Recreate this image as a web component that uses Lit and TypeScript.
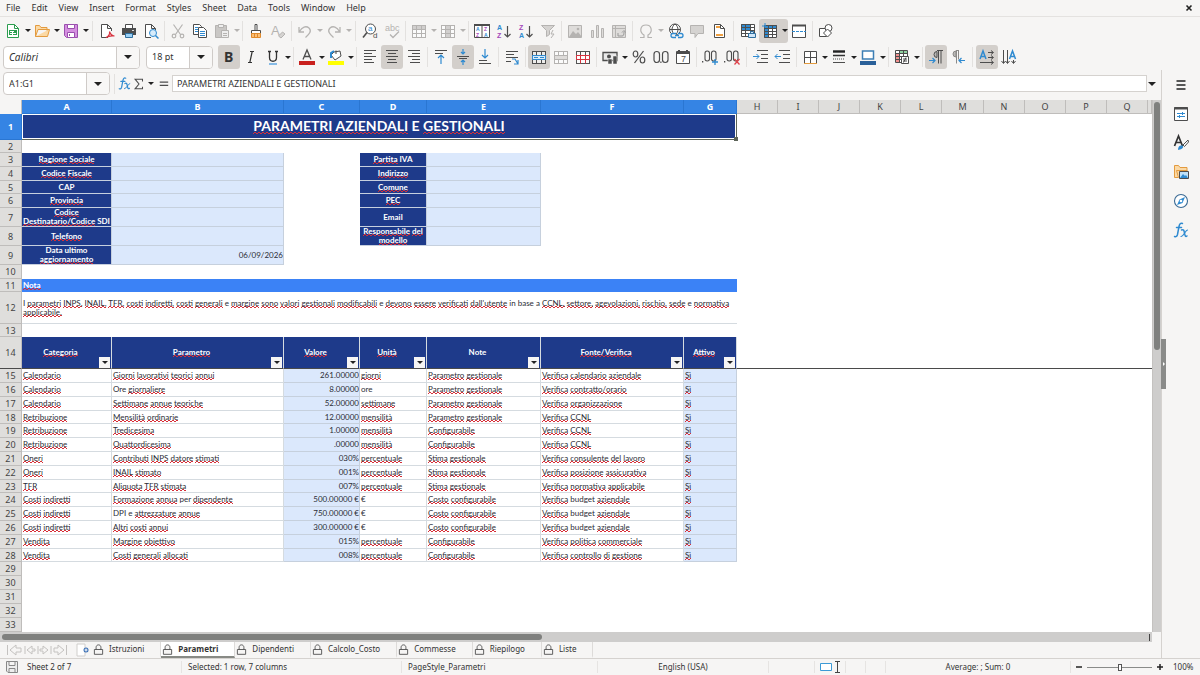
import { LitElement, html, svg, css, nothing, TemplateResult, SVGTemplateResult } from 'lit';
import { customElement, property } from 'lit/decorators.js';
import { classMap } from 'lit/directives/class-map.js';
import { styleMap } from 'lit/directives/style-map.js';

const G = '#4d4d4d';
const M = '#b5b3b1';
const B = '#2f8ad0';
const V = '#a347ba';

const letters = (x: number, y: number, c: string, t: string, size = 8, weight = 400) =>
  svg`<text x=${x} y=${y} fill=${c} font-size=${size} font-weight=${weight} font-family="Liberation Sans, sans-serif">${t}</text>`;

const lines = (color: string, ...segs: number[][]) =>
  svg`<path fill="none" stroke=${color} d=${segs.map(([x1, y, x2]) => `M${x1} ${y}H${x2}`).join('')} />`;

const grid = (c: string, extra?: SVGTemplateResult) =>
  svg`<rect x="1.5" y="2.5" width="13" height="12" fill="#fff" fill-opacity=".6" stroke=${c}/><path fill="none" stroke=${c} d="M1.5 6.5h13M1.5 10.5h13M5.5 2.5v12M10.5 2.5v12"/>${extra ?? nothing}`;

const icons: Record<string, SVGTemplateResult> = {
  new: svg`<path fill="#fff" stroke="#2a9d4e" d="M2.5 1.5h7l4 4v9h-11z"/><path fill="none" stroke="#2a9d4e" d="M9.5 1.5v4h4"/><path fill="#2a9d4e" d="M4 7h8v5H4z"/><path stroke="#fff" d="M5 8.5h4M5 10.5h6M7.5 8v4" fill="none"/>`,
  open: svg`<path fill="#fbd9a5" stroke="#e39b3f" d="M1.5 13.500V2.500h4l1.500 2h6v3M1.500 13.500h12l2-7H4z"/>`,
  save: svg`<path fill="#d58fe0" stroke="#9a4fae" d="M1.5 1.500h13v13H3.500l-2-2z"/><path fill="#fff" stroke="#9a4fae" d="M4.500 1.500h7v4h-7zM4.500 9.500h7v5h-7z"/><path stroke="#9a4fae" d="M6.500 11v2"/>`,
  pdf: svg`<path fill="#fff" stroke=${G} d="M9 14.500H2.500v-13h6l4 4V8M8.500 1.500v4h4"/><path fill="none" stroke="#d8333f" stroke-width="1.200" d="M7 14.500c3-1 4-4 3.500-6 1 3 2.500 4.500 5 4.500-3-.5-6 0-8.500 1.500z"/>`,
  print: svg`<path fill="#fff" stroke=${G} d="M4.500 5V1.500h7V5"/><path fill="#4d4d4d" d="M1 5h14v7H1z"/><path fill="#9bd0f5" stroke="#2f6f9f" d="M4.500 10.500h7v4h-7z"/><path stroke="#ddd" d="M11 7.500h2"/>`,
  preview: svg`<path fill="#fff" stroke=${G} d="M8 14.500H2.500v-13h6l4 4V7M8.500 1.500v4h4"/><circle cx="10" cy="10" r="3.500" fill="#d7ecfb" stroke=${B}/><path stroke=${B} stroke-width="1.500" d="M12.500 12.500l3 3"/>`,
  cut: svg`<g fill="none" stroke=${M} stroke-width="1.200"><path d="M3.500 1.500l7 10M12.500 1.500l-7 10"/><circle cx="4" cy="13" r="1.800"/><circle cx="12" cy="13" r="1.800"/></g>`,
  copy: svg`<path fill="#fff" stroke=${G} d="M1.500 1.500h6l2 2v8h-8z"/><path stroke=${B} d="M3 4.500h3M3 6.500h3M3 8.500h3"/><path fill="#fff" stroke=${G} d="M6.500 4.500h5l3 3v7h-8z"/><path stroke=${B} d="M8 8.500h5M8 10.500h5M8 12.500h5"/>`,
  paste: svg`<path fill="#c9c7c5" stroke=${M} d="M1.500 2.500h11v12h-11z"/><path fill="#eee" stroke=${M} d="M4.500 1.500h5v3h-5zM7.500 7.500h7v7h-7z"/><path stroke=${M} d="M9 10.500h4M9 12.500h4"/>`,
  brush: svg`<path fill="#fff" stroke=${G} d="M7 1.500h2v6H7zM3.500 7.500h9v3h-9z"/><path fill="#fbbf77" stroke="#e08a2c" d="M3.500 10.500h9v4h-9z"/><path stroke="#e08a2c" d="M6.500 11v3M9.500 11v3"/>`,
  clear: svg`${letters(1, 12, M, 'A', 13)}<path fill="#d5d3d1" stroke=${M} d="M8.500 13l4-4 2.500 2-4 4z"/>`,
  undo: svg`<path fill="none" stroke=${M} stroke-width="1.300" d="M2 4v5h5M2.500 8.500C5 4 9 2.500 12 5c3 3 .5 6-3.500 9.500"/>`,
  redo: svg`<path fill="none" stroke=${M} stroke-width="1.300" d="M14 4v5H9M13.500 8.500C11 4 7 2.500 4 5c-3 3-.5 6 3.500 9.500"/>`,
  find: svg`<circle cx="8.500" cy="6" r="5" fill="#fff" stroke=${G}/><path stroke=${G} stroke-width="1.600" d="M5 9.500l-4 5"/>${letters(6, 8, B, 'a', 8)}${letters(11, 15, G, 'd', 8)}`,
  spell: svg`${letters(1, 8, M, 'abc', 9)}<path fill="none" stroke=${M} stroke-width="1.300" d="M6 11.500l3 3 6-6"/>`,
  row: grid(M, svg`<path fill=${M} fill-opacity=".6" d="M2 3h12v4H2z" />`),
  col: grid(M, svg`<path fill=${M} fill-opacity=".6" d="M5 3h5v11H5z" />`),
  sort: svg`<path fill="#fff" stroke=${G} d="M.5 1.500h15v13H.5zM8 3v12"/><path stroke=${G} stroke-width="2" d="M0 2h16"/>${letters(2, 8, B, 'A', 5, 700)}${letters(2, 14, V, 'Z', 5, 700)}${letters(10, 8, V, 'Z', 5, 700)}${letters(10, 14, B, 'A', 5, 700)}`,
  az: svg`${letters(1, 7, B, 'A', 7, 700)}${letters(1, 15, V, 'Z', 7, 700)}<path fill="none" stroke=${G} stroke-width="1.200" d="M11.500 3v11M8.500 11l3 3 3-3"/>`,
  za: svg`${letters(1, 7, V, 'Z', 7, 700)}${letters(1, 15, B, 'A', 7, 700)}<path fill="none" stroke=${G} stroke-width="1.200" d="M11.500 3v11M8.500 11l3 3 3-3"/>`,
  filter: svg`<path fill="#d5d3d1" stroke=${M} d="M1.500 2.500h13l-5 5v4l-3 2v-6z"/><path fill="none" stroke=${M} d="M13 7l-2 4h3l-3 4"/>`,
  image: svg`<path fill="#dedcda" stroke=${M} d="M1.500 2.500h13v12h-13z"/><path fill=${M} d="M2 14l4-6 3 3 2-2 4 5z"/><circle cx="11" cy="6" r="1.300" fill=${M}/>`,
  chart: svg`<path fill="#dedcda" stroke=${M} d="M2.500 7.500h2v7h-2zM7.500 2.500h2v12h-2zM12.500 5.500h2v9h-2z"/>`,
  pivot: svg`<path fill="#dedcda" stroke=${M} d="M1.500 2.500h13v12h-13zM1.500 5.500h13M4.500 2.500v12"/><path fill="none" stroke="#999" d="M7 10v3h4c1.500 0 2-1 2-4M11 9.500l2-2 1.500 2"/>`,
  omega: svg`<path fill="none" stroke=${M} stroke-width="1.200" d="M2 14.500h4V12C1 9 2 2 8 2s7 7 2 10v2.500h4"/>`,
  link: svg`<circle cx="8" cy="6.500" r="5.500" fill="#fff" stroke=${G}/><path fill="none" stroke=${G} d="M2.500 6.500h11M8 1c-4 3-4 8 0 11M8 1c4 3 4 8 0 11"/><path fill="#f6f5f4" stroke=${B} stroke-width="1.300" d="M9 10.500H6a2 2 0 000 4h3M11 10.500h3a2 2 0 010 4h-3M8 12.500h4"/>`,
  comment: svg`<path fill="#d5d3d1" stroke=${M} d="M1.500 2.500h13v8H9l-3 4v-4H1.500z"/>`,
  header: svg`<path fill="#fff" stroke=${G} d="M3.500 1.500h6l4 4v9h-10z"/><path fill="#f0a040" d="M5 3h4v2H5zM5 11h7v2H5z"/><path fill="none" stroke=${G} d="M9.500 1.500v4h4"/>`,
  area: svg`<path fill="#fff" d="M1 1h14v13H1z"/><path fill=${B} d="M1 1h10v7H1z"/><path fill="none" stroke=${G} d="M1.500 1.500h13v12h-13zM1.500 4.500h13M1.500 7.500h13M1.500 10.500h13M5.500 1.500v12M10.500 1.500v12"/><path fill="#cfe6f8" stroke="#2f6f9f" d="M8.500 10.500h7v4h-7zM10.500 8.500h3v2h-3z"/>`,
  freeze: svg`<path fill="#fff" d="M3 3h12v12H3z"/><path fill=${B} d="M2 2h13v3H6v10H2z"/><path fill="none" stroke=${G} d="M2.500 2.500h12v12h-12zM2.500 5.500h12M2.500 8.500h12M2.500 11.500h12M6.500 2.500v12M10.500 2.500v12"/><path stroke=${B} fill="none" d="M0 3h4M3 0v5"/>`,
  split: svg`<path fill="#fff" stroke=${G} d="M1.500 2.500h13v12h-13z"/><path stroke=${G} stroke-width="2" d="M1 2.500h14"/><path stroke=${B} stroke-dasharray="3 1" d="M1 8.500h14"/>`,
  shapes: svg`<path fill="#fff" stroke=${G} d="M1.500 5.500h7v8h-7z"/><circle cx="10.500" cy="5" r="3.500" fill="#fff" stroke=${G}/><path fill="#fff" stroke=${G} d="M9.500 6l4 4-4 4-4-4z"/>`,
  bold: svg`<text x="3" y="13" fill="#333" font-size="14" font-weight="700" font-family="Noto Sans, sans-serif">B</text>`,
  italic: svg`<path fill="none" stroke="#333" stroke-width="1.200" d="M7 2.500h4M5 13.500h4M9.200 2.500L6.800 13.500"/>`,
  underline: svg`<path fill="none" stroke="#333" stroke-width="1.300" d="M3 2.500h3M10 2.500h3M4.500 2.500v6c0 5 7 5 7 0v-6"/><path stroke="#4a9ade" stroke-width="1.300" d="M4 15h8"/>`,
  fontcolor: svg`<path fill="none" stroke=${G} stroke-width="1.300" d="M4 10.500L8 1l4 9.500M5.300 7.500h5.400"/><path fill="#c9211e" d="M0 12h16v4H0z"/>`,
  fill: svg`<path fill="#fff" stroke=${G} d="M6 3l6-1 1 5-6 4-4-5zM8 5V1.500"/><path fill="none" stroke=${B} stroke-width="2" d="M3 9V4l3-2"/><path fill="#ffff00" d="M0 12h16v4H0z"/>`,
  left: lines(G, [2, 1.5, 14], [2, 4.5, 10], [2, 7.5, 14], [2, 10.500, 10], [2, 13.500, 12]),
  center: lines(G, [2, 1.5, 14], [4, 4.5, 12], [2, 7.5, 14], [4, 10.500, 12], [3, 13.500, 13]),
  right: lines(G, [2, 1.5, 14], [6, 4.5, 14], [2, 7.5, 14], [6, 10.500, 14], [4, 13.500, 14]),
  top: svg`${lines(G, [2, 1.5, 14], [2, 4.500, 10])}<path fill="none" stroke=${B} stroke-width="1.200" d="M8 15V6M5 9l3-3 3 3"/>`,
  middle: svg`${lines(G, [2, 7.500, 14], [4, 9.500, 12])}<path fill="none" stroke=${B} stroke-width="1.200" d="M8 0v5M6 3l2 2 2-2M8 16v-5M6 13l2-2 2 2"/>`,
  bottom: svg`${lines(G, [2, 11.500, 10], [2, 14.500, 14])}<path fill="none" stroke=${B} stroke-width="1.200" d="M8 0v9M5 6l3 3 3-3"/>`,
  wrap: svg`${lines(G, [2, 2.500, 14], [2, 5.500, 10], [2, 8.500, 14], [2, 12.500, 7])}<path fill="none" stroke=${B} stroke-width="1.200" d="M8 10h3l3 5M14 11v4h-4"/>`,
  merge: grid(G, svg`<path fill="#d8ecfb" stroke=${B} d="M1.500 6.500h13v4h-13z"/><path fill="none" stroke=${B} d="M3 8.500h4M9 8.500h4"/>`),
  mergec: grid(M, svg`<path fill="#dedcda" stroke=${M} d="M1.500 6.500h13v4h-13z"/>`),
  unmerge: svg`${grid('#555')}<path fill="#fff" stroke="#d8333f" d="M1.500 6.500h13v4h-13zM5.500 6.500v8M10.500 6.500v8"/>`,
  currency: svg`<path fill="#e9e9e9" stroke=${G} stroke-width="1.300" d="M1 3.500h14v8H1z"/><circle cx="7" cy="7.500" r="2" fill=${G}/><path fill=${G} stroke="#f6f5f4" stroke-width=".5" d="M6 10h4v5H6zM11 7h4v8h-4z"/>`,
  percent: svg`<g fill="none" stroke=${G} stroke-width="1.200"><ellipse cx="4.500" cy="5" rx="2.300" ry="3"/><ellipse cx="11.500" cy="11" rx="2.300" ry="3"/><path d="M12.500 2l-9 12"/></g>`,
  number: svg`<g fill="none" stroke=${G} stroke-width="1.200"><rect x="1" y="2.500" width="5.500" height="11" rx="2.700"/><rect x="9.500" y="2.500" width="5.500" height="11" rx="2.700"/></g><path fill=${G} d="M7.300 12.500h1.200V14H7.300z"/>`,
  date: svg`<path fill="#fff" stroke=${G} d="M1.500 2.500h13v12h-13z"/><path stroke=${G} stroke-width="2" d="M1 4h14M4 1v3M12 1v3"/>${letters(6, 13, G, '7', 9)}`,
  adddec: svg`<g fill="none" stroke=${G} stroke-width="1.100"><rect x="3" y="2" width="4.500" height="10" rx="2.200"/><rect x="9.500" y="2" width="4.500" height="10" rx="2.200"/></g><path fill=${G} d="M0 12h1.300v1.500H0z"/><path stroke=${B} stroke-width="1.300" d="M13 10v6M10 13h6"/>`,
  deldec: svg`<g fill="none" stroke=${G} stroke-width="1.100"><rect x="3" y="2" width="4.500" height="10" rx="2.200"/><rect x="9.500" y="2" width="4.500" height="10" rx="2.200"/></g><path fill=${G} d="M0 12h1.300v1.500H0z"/><path stroke="#e0434c" stroke-width="1.300" d="M10.500 10l5 5.500M15.500 10l-5 5.500"/>`,
  indent: svg`${lines(G, [4, 1.500, 15], [8, 5.500, 15], [8, 9.500, 15], [4, 13.500, 15])}<path fill="none" stroke=${B} d="M0 7.500h6M3.500 5l2.500 2.500L3.500 10"/>`,
  outdent: svg`${lines(G, [4, 1.500, 15], [8, 5.500, 15], [8, 9.500, 15], [4, 13.500, 15])}<path fill="none" stroke=${B} d="M0 7.500h6M2.500 5L0 7.500 2.500 10"/>`,
  borders: svg`<path fill="#fff" stroke=${G} d="M2.500 2.500h12v12h-12zM8.500 2.500v12M2.500 8.500h12"/><path stroke="#e39b3f" d="M2 14.500h13"/>`,
  style: svg`<path stroke="#222" stroke-width="2.400" d="M2 2.500h12"/><path stroke="#333" stroke-width="1.500" d="M2 6.500h12"/><path stroke=${G} stroke-dasharray="1 1" d="M2 10h12"/><path stroke=${G} d="M2 13.500h12"/>`,
  bcolor: svg`<path fill="#fff" stroke="#3d7fb5" stroke-width="1.500" d="M2.500 2h11v8h-11z"/><path fill="#2a6099" d="M0 12h16v4H0z"/>`,
  cond: svg`<path fill="#fff" stroke=${G} d="M1.500 1.500h12v12h-12z"/><path fill="#f0908f" d="M2 5h4v8H2z"/><path fill="#8fd0a0" d="M6 2h7v3H6z"/><path fill="none" stroke=${G} d="M1.500 4.500h12M1.500 7.500h12M1.500 10.500h12M5.500 1.500v12M9.500 1.500v6"/><path fill="#fff" stroke=${G} d="M7.500 7.500h7v7h-7z"/><path stroke=${G} d="M9 10h4M9 12h4M12 8.500l-2.500 5"/>`,
  ltr: svg`<path fill="#b9b7b5" stroke=${G} d="M9 2.500a3 3 0 000 6z"/><path fill="none" stroke=${G} d="M15 1.500H9M10.500 1.500v13M13 1.500v13"/><path fill="none" stroke=${B} stroke-width="1.200" d="M1 11.500h6M4.500 9L7 11.500 4.500 14"/>`,
  rtl: svg`<path fill="#b9b7b5" stroke="#8c8a88" d="M6 2a3 3 0 000 6z"/><path fill="none" stroke="#8c8a88" d="M9 1.500H6M6.500 1.500v13M8.500 1.500v9"/><path fill="none" stroke=${B} stroke-width="1.200" d="M15 11.500H9M11.500 9L9 11.500l2.500 2.500"/>`,
  horiz: svg`<path fill="none" stroke=${B} stroke-width="1.500" d="M1 10L4 2l3 8M2 7.500h4"/><path fill="none" stroke=${G} d="M9 3.500h5M12 1.500l2.500 2L12 5.500M9 8.500h5M12 6.500l2.500 2-2.500 2M1 13.500h13M12 11.500l2.500 2-2.500 2"/>`,
  vert: svg`<path fill="none" stroke=${B} stroke-width="1.500" d="M8.500 10l3-8 3 8M9.500 7.500h4"/><path fill="none" stroke=${G} d="M2.500 1v13M.5 12l2 2.500 2-2.500M6.500 1v13M4.500 12l2 2.500 2-2.500M12.500 11v3M10.500 12l2 2.500 2-2.500"/>`,
  fx: svg`<g fill="none" stroke=${B} stroke-linecap="round"><path stroke-width="1.500" d="M9.500 1.500C7.500.5 6.500 2 6 4.500l-1.500 8C4 14.500 3 15 1.500 14.500M3.500 5.500h5"/><path stroke-width="1.500" d="M8.500 8c2-1 2.500 0 3 3s1 4 2.500 3"/><path stroke-width="1.200" d="M14.500 8c-2 0-4 6.500-6.500 6.500"/></g>`,
  sum: svg`<path fill="none" stroke=${G} stroke-width="1.200" d="M12 5V2.500H3.500L8 8l-4.500 5.500H12V11"/>`,
  equals: svg`<path stroke=${G} stroke-width="1.500" d="M4 6.500h9M4 10h9"/>`,
  menu: svg`<path stroke="#222" stroke-width="1.700" d="M3.500 4h9M3.500 8h9M3.500 12h9"/>`,
  props: svg`<path fill="#fff" stroke=${G} d="M1.500 1.500h13v13h-13z"/><path stroke=${G} stroke-width="2" d="M1 2.500h14"/><path stroke=${B} d="M4 7.500h8M4 10.500h8M9.500 6v3M6.500 9v3"/>`,
  styles: svg`<path fill="none" stroke="#333" stroke-width="1.700" d="M1.500 11L5.500 1l4 10M3 7.500h5"/><path fill="#fff" stroke=${G} d="M15 5l-5 5 1.500 1.500L15.500 7z"/><path fill=${B} d="M5 15c0-4 2-5 4-4.500s2 3.500-4 4.500z"/>`,
  gallery: svg`<path fill="#fbd9a5" stroke="#e39b3f" d="M1.500 13.500v-12h4l1.500 2h7v3M1.500 13.500h4l-2-7h11"/><path fill="#bfe0f7" stroke=${G} d="M6.500 7.500h9v7h-9z"/><path fill=${B} d="M7 14l3-4 2 2 1-1 2 3z"/>`,
  navigator: svg`<circle cx="8" cy="8" r="6.500" fill="#fff" stroke="#3a6a94" stroke-width="1.100"/><path fill=${B} d="M12 4l-2.500 6L4 12l2.500-5.500z"/><circle cx="8" cy="8" r="1.300" fill="#fff"/>`,
  lock: svg`<path fill="#f6f5f4" stroke=${G} stroke-width="1.300" d="M2 8h12v7H2zM4.500 8V5c0-5 7-5 7 0v3"/>`,
};

const icon = (name: string, size = 16): TemplateResult =>
  html`<svg width=${size} height=${size} viewBox="0 0 16 16" aria-hidden="true">${icons[name]}</svg>`;

type Tool = { i?: string; label?: string; drop?: boolean; on?: boolean; off?: boolean; sep?: 'n' | 'w' };
const t = (i: string, label: string, o: Partial<Tool> = {}): Tool => ({ i, label, ...o });
const N: Tool = { sep: 'n' };
const W: Tool = { sep: 'w' };

const standardBar: Tool[] = [
  t('new', 'New', { drop: true }), t('open', 'Open', { drop: true }), t('save', 'Save', { drop: true }), W,
  t('pdf', 'Export as PDF'), t('print', 'Print'), t('preview', 'Print Preview'), N,
  t('cut', 'Cut', { off: true }), t('copy', 'Copy'), t('paste', 'Paste', { drop: true, off: true }), N,
  t('brush', 'Clone Formatting'), t('clear', 'Clear Direct Formatting', { off: true }), N,
  t('undo', 'Undo', { drop: true, off: true }), t('redo', 'Redo', { drop: true, off: true }), W,
  t('find', 'Find & Replace'), t('spell', 'Spelling', { off: true }), N,
  t('row', 'Row', { drop: true, off: true }), t('col', 'Column', { drop: true, off: true }), N,
  t('sort', 'Sort'), t('az', 'Sort Ascending'), t('za', 'Sort Descending'), t('filter', 'AutoFilter', { off: true }), N,
  t('image', 'Insert Image', { off: true }), t('chart', 'Insert Chart', { off: true }), t('pivot', 'Pivot Table', { off: true }), N,
  t('omega', 'Special Character', { drop: true, off: true }), t('link', 'Hyperlink'), t('comment', 'Comment', { off: true }),
  t('header', 'Headers and Footers'), W,
  t('area', 'Define Print Area'), t('freeze', 'Freeze Rows and Columns', { drop: true, on: true }), t('split', 'Split Window'), N,
  t('shapes', 'Show Draw Functions'),
];

const formatBar: Tool[] = [
  t('bold', 'Bold', { on: true }), t('italic', 'Italic'), t('underline', 'Underline', { drop: true }), N,
  t('fontcolor', 'Font Color', { drop: true }), t('fill', 'Background Color', { drop: true }), N,
  t('left', 'Align Left'), t('center', 'Center Horizontally', { on: true }), t('right', 'Align Right'), N,
  t('top', 'Align Top'), t('middle', 'Center Vertically', { on: true }), t('bottom', 'Align Bottom'), N,
  t('wrap', 'Wrap Text'), N,
  t('merge', 'Merge and Center Cells', { on: true }), t('mergec', 'Merge Cells', { off: true }), t('unmerge', 'Unmerge Cells'), N,
  t('currency', 'Format as Currency', { drop: true }), t('percent', 'Format as Percent'), t('number', 'Format as Number'), t('date', 'Format as Date'), N,
  t('adddec', 'Add Decimal Place'), t('deldec', 'Delete Decimal Place'), W,
  t('indent', 'Increase Indent'), t('outdent', 'Decrease Indent'), N,
  t('borders', 'Borders', { drop: true }), t('style', 'Border Style', { drop: true }), t('bcolor', 'Border Color', { drop: true }), N,
  t('cond', 'Conditional Formatting', { drop: true }), N,
  t('ltr', 'Left-To-Right', { on: true }), t('rtl', 'Right-To-Left'), W,
  t('horiz', 'Text Direction Horizontal', { on: true }), t('vert', 'Text Direction Vertical'),
];

const UI = css`"Noto Sans", "Open Sans", sans-serif`;

const buttonReset = css`
  button { border: 0; background: none; padding: 0; margin: 0; font: inherit; color: inherit; display: flex; align-items: center; justify-content: center; }
  svg { overflow: visible; }
  .arrow { width: 0; height: 0; border: 3px solid transparent; border-bottom: 0; border-top-color: #222; }
`;

@customElement('tool-bar')
export class ToolBar extends LitElement {
  @property({ attribute: false }) tools: Tool[] = [];

  static styles = [
    buttonReset,
    css`
      :host { display: flex; align-items: center; height: 26px; }
      .tool { display: flex; height: 24px; border-radius: 3px; flex: none; }
      .main { width: 22px; }
      .drop { width: 7px; }
      .on { background: #d3cfcb; }
      .off .arrow { border-top-color: #b5b3b1; }
      .sep { align-self: stretch; width: 5px; flex: none; display: flex; justify-content: center; }
      .sep::before { content: ''; width: 1px; margin: 3px 0; background: #e3e1df; }
      .wide { width: 7px; }
    `,
  ];

  render() {
    return this.tools.map((x) =>
      x.sep
        ? html`<span class=${classMap({ sep: true, wide: x.sep === 'w' })}></span>`
        : html`<span class=${classMap({ tool: true, on: !!x.on, off: !!x.off })}>
            <button class="main" aria-label=${x.label!} ?disabled=${x.off}>${icon(x.i!)}</button>
            ${x.drop ? html`<button class="drop" aria-label="${x.label} options"><span class="arrow"></span></button>` : nothing}
          </span>`
    );
  }
}

const known = new Set(['I', 'e', 'in', 'base', 'a', 'Ore', 'ore', 'DPI', 'SDI', 'CAP', 'IVA', 'Note', '€', 'Email', 'Data', 'ultimo', 'E', 'per', 'budget']);

/** Splits cell text into words and marks those the dictionary does not know. */
const checked = (text: string) =>
  text.split(/(\s+)/).map((w) => (/[A-Za-zÀ-ú]/.test(w) && !known.has(w) ? html`<span class="err">${w}</span>` : w));

const letterCols = 'ABCDEFGHIJKLMNOPQ'.split('');
const colWidths = [22, 90, 172, 76, 67, 114, 143, 53, 41, 41, 41, 41, 41, 42, 41, 41, 41, 41];

const master: Array<[number, number, string, string?]> = [
  [3, 14, 'Ragione Sociale', 'Partita IVA'],
  [4, 14, 'Codice Fiscale', 'Indirizzo'],
  [5, 13, 'CAP', 'Comune'],
  [6, 14, 'Provincia', 'PEC'],
  [7, 19, 'Codice Destinatario/Codice SDI', 'Email'],
  [8, 18, 'Telefono', 'Responsabile del modello'],
  [9, 19, 'Data ultimo aggiornamento'],
];

const headers = ['Categoria', 'Parametro', 'Valore', 'Unità', 'Note', 'Fonte/Verifica', 'Attivo'];

const params: string[][] = [
  ['Calendario', 'Giorni lavorativi teorici annui', '261.00000', 'giorni', 'Parametro gestionale', 'Verifica calendario aziendale'],
  ['Calendario', 'Ore giornaliere', '8.00000', 'ore', 'Parametro gestionale', 'Verifica contratto/orario'],
  ['Calendario', 'Settimane annue teoriche', '52.00000', 'settimane', 'Parametro gestionale', 'Verifica organizzazione'],
  ['Retribuzione', 'Mensilità ordinarie', '12.00000', 'mensilità', 'Parametro gestionale', 'Verifica CCNL'],
  ['Retribuzione', 'Tredicesima', '1.00000', 'mensilità', 'Configurabile', 'Verifica CCNL'],
  ['Retribuzione', 'Quattordicesima', '.00000', 'mensilità', 'Configurabile', 'Verifica CCNL'],
  ['Oneri', 'Contributi INPS datore stimati', '030%', 'percentuale', 'Stima gestionale', 'Verifica consulente del lavoro'],
  ['Oneri', 'INAIL stimato', '001%', 'percentuale', 'Stima gestionale', 'Verifica posizione assicurativa'],
  ['TFR', 'Aliquota TFR stimata', '007%', 'percentuale', 'Stima gestionale', 'Verifica normativa applicabile'],
  ['Costi indiretti', 'Formazione annua per dipendente', '500.00000 €', '€', 'Costo configurabile', 'Verifica budget aziendale'],
  ['Costi indiretti', 'DPI e attrezzature annue', '750.00000 €', '€', 'Costo configurabile', 'Verifica budget aziendale'],
  ['Costi indiretti', 'Altri costi annui', '300.00000 €', '€', 'Costo configurabile', 'Verifica budget aziendale'],
  ['Vendita', 'Margine obiettivo', '015%', 'percentuale', 'Configurabile', 'Verifica politica commerciale'],
  ['Vendita', 'Costi generali allocati', '008%', 'percentuale', 'Configurabile', 'Verifica controllo di gestione'],
];

@customElement('sheet-grid')
export class SheetGrid extends LitElement {
  static styles = [
    buttonReset,
    css`
      :host { display: block; overflow: hidden; background: #fff; }
      table { width: 100%; table-layout: fixed; border-collapse: separate; border-spacing: 0; font: 8px/9px Lato, "Open Sans", sans-serif; color: #2c2d36; }
      td, th { padding: 0 1px; box-sizing: border-box; font-weight: 400; text-align: left; overflow: hidden; }
      .colhead, .rowhead { background: #dfdedc; color: #444; font: 9px/11px ${UI}; text-align: center; padding: 0; border-right: 1px solid #bfbdbb; border-bottom: 1px solid #bfbdbb; }
      .corner { background: #f6f5f4; padding: 0; border-right: 1px solid #bfbdbb; }
      .sel { background: #3584e4; color: #fff; font-weight: 700; border-color: #2a76d2; }
      .title { position: relative; overflow: visible; background: #1e3a8a; color: #fff; font-size: 14px; line-height: 18px; font-weight: 700; text-align: center; padding: 0 0 2px; border: 1px solid #5c6458; border-width: 0 1px 1px 0; box-shadow: inset 0 0 0 1px #fff; }
      .grip { position: absolute; right: -2px; bottom: -2px; width: 4px; height: 4px; background: #5c6458; }
      .key { background: #1e3a8a; color: #fff; font-weight: 700; text-align: center; border-right: 1px solid #c6cfde; border-bottom: 1px solid #c6cfde; padding: 0; }
      .val { background: #dbe8fc; border-right: 1px solid #c6d0dd; border-bottom: 1px solid #c6d0dd; }
      .num { text-align: right; padding-right: 0; }
      .cell { border-right: 1px solid #d5dbe0; border-bottom: 1px solid #d5dbe0; white-space: nowrap; }
      .nota { background: #3b82f6; color: #fff; font-weight: 700; }
      .note { border-bottom: 1px solid #d5dbe0; }
      .head { background: #1e3a8a; color: #fff; font-weight: 700; padding: 0; border-right: 1px solid #d5dbe0; }
      .headbox { display: grid; grid-template-columns: 1fr 12px; align-items: center; height: 30px; text-align: center; }
      .filter { width: 11px; height: 11px; background: #f6f5f4; align-self: end; }
      .frozen > * { border-bottom: 1px solid #4a4a4a; }
      .err { background: url("data:image/svg+xml,%3Csvg xmlns='http://www.w3.org/2000/svg' width='4' height='2'%3E%3Cpath d='M0 2L2 0L4 2' fill='none' stroke='%23d62f38'/%3E%3C/svg%3E") repeat-x left bottom; }
    `,
  ];

  private row(n: number, h: number, cells: unknown, cls = '') {
    return html`<tr class=${cls} style=${styleMap({ height: `${h}px` })}>
      <th class=${classMap({ rowhead: true, sel: n === 1 })} scope="row">${n}</th>${cells}</tr>`;
  }

  render() {
    return html`<table>
      <colgroup>${colWidths.map((w) => html`<col style=${styleMap({ width: `${w}px` })} />`)}<col /></colgroup>
      <thead>
        <tr style=${styleMap({ height: '14px' })}>
          <td class="corner"></td>
          ${letterCols.map((l, i) => html`<th scope="col" class=${classMap({ colhead: true, sel: i < 7 })}>${l}</th>`)}
          <td class="colhead"></td>
        </tr>
      </thead>
      <tbody>
        ${this.row(1, 26, html`<td class="title" colspan="7">${checked('PARAMETRI AZIENDALI E GESTIONALI')}<span class="grip"></span></td><td colspan="11"></td>`)}
        ${this.row(2, 13, html`<td colspan="18"></td>`)}
        ${master.map(([n, h, a, b]) => this.row(n, h, html`
          <th class="key" scope="row">${checked(a)}</th>
          <td class="val num">${n === 9 ? '06/09/2026' : nothing}</td>
          <td></td>
          ${b ? html`<th class="key" scope="row">${checked(b)}</th><td class="val"></td><td colspan="13"></td>` : html`<td colspan="15"></td>`}`))}
        ${this.row(10, 14, html`<td colspan="18"></td>`)}
        ${this.row(11, 13, html`<td class="nota" colspan="7">${checked('Nota')}</td><td colspan="11"></td>`)}
        ${this.row(12, 32, html`<td class="note" colspan="7">${checked("I parametri INPS, INAIL, TFR, costi indiretti, costi generali e margine sono valori gestionali modificabili e devono essere verificati dall'utente in base a CCNL, settore, agevolazioni, rischio, sede e normativa applicabile.")}</td><td colspan="11"></td>`)}
        ${this.row(13, 13, html`<td colspan="18"></td>`)}
        ${this.row(14, 32, html`${headers.map((h) => html`<th class="head" scope="col"><div class="headbox"><span>${checked(h)}</span><button class="filter" aria-label="Filter ${h}"><span class="arrow"></span></button></div></th>`)}<td colspan="11"></td>`, 'frozen')}
        ${params.map((p, i) => this.row(15 + i, i % 5 === 3 ? 13 : 14, html`
          ${p.map((c, k) => html`<td class=${classMap({ cell: k !== 2, val: k === 2, num: k === 2 })}>${k === 2 ? c : checked(c)}</td>`)}
          <td class="val">${checked('Sì')}</td><td colspan="11"></td>`))}
        ${[29, 30, 31, 32, 33].map((n) => this.row(n, 14, html`<td colspan="18"></td>`))}
      </tbody>
    </table>`;
  }
}

const menus = ['File', 'Edit', 'View', 'Insert', 'Format', 'Styles', 'Sheet', 'Data', 'Tools', 'Window', 'Help'];
const tabs = ['Istruzioni', 'Parametri', 'Dipendenti', 'Calcolo_Costo', 'Commesse', 'Riepilogo', 'Liste'];

@customElement('app-root')
export class AppRoot extends LitElement {
  static styles = [
    buttonReset,
    css`
      :host { display: flex; flex-direction: column; height: 100vh; overflow: hidden; background: #f6f5f4; color: #333; font: 9px/12px ${UI}; }
      input { font: inherit; color: inherit; border: 0; padding: 0; margin: 0; min-width: 0; background: none; }
      .menubar { display: flex; align-items: center; gap: 11px; height: 17px; box-sizing: border-box; padding: 0 7px 0 6px; border-bottom: 1px solid #e4e2e0; }
      .close { margin-left: auto; width: 8px; }
      .bar { display: flex; align-items: center; height: 27px; padding-left: 2px; }
      .format { height: 26px; gap: 6px; padding-left: 3px; }
      .combo { display: flex; height: 23px; box-sizing: border-box; border: 1px solid #cfcbc8; border-radius: 4px; background: #fff; overflow: hidden; }
      .combo input { flex: 1; padding-left: 5px; }
      .combo button { width: 23px; border-left: 1px solid #cfcbc8; background: #f8f7f6; }
      .big { border-width: 4px; border-bottom: 0; }
      .font { width: 137px; font-size: 10px; font-style: italic; }
      .size { width: 67px; margin-right: -1px; }
      .name { width: 107px; }
      .work { flex: 1; min-height: 0; display: flex; }
      .main { flex: 1; min-width: 0; display: flex; flex-direction: column; }
      .formulabar { display: flex; align-items: center; height: 30px; padding: 0 4px 3px 3px; box-sizing: border-box; }
      .fx { margin-left: 4px; width: 17px; height: 20px; border-left: 1px solid #e3e1df; padding-left: 3px; }
      .sum { width: 15px; }
      .drop { width: 9px; }
      .accept { width: 17px; }
      .formula { flex: 1; height: 17px; box-sizing: border-box; border: 1px solid #d5d2cf; background: #fff; padding-left: 4px; }
      .expand { width: 10px; }
      .gridwrap { flex: 1; min-height: 0; display: flex; }
      sheet-grid { flex: 1; min-width: 0; }
      .vscroll { width: 9px; background: #cecdcc; border-left: 1px solid #c4c2c0; padding: 2px 1px; box-sizing: border-box; }
      .vthumb { height: 47%; width: 6px; border-radius: 3px; background: #7f807e; }
      .hscroll { display: flex; align-items: center; justify-content: space-between; height: 10px; padding: 0 2px; background: #cecdcc; margin-right: 9px; }
      .hthumb { width: 47%; height: 6px; border-radius: 3px; background: #7f807e; }
      .hgrip { width: 1px; height: 7px; background: #444; }
      .tabs { display: flex; align-items: stretch; height: 16px; font-size: 8px; padding-left: 6px; }
      .nav { display: flex; align-items: center; width: 61px; color: #c4c2c0; }
      .addtab { width: 19px; margin: 0 0 0 6px; }
      .tab { gap: 5px; padding: 0 16px 0 1px; border-bottom: 2px solid transparent; border-right: 1px solid #dddbd9; }
      .active { background: #fff; border-bottom-color: #888a85; font-weight: 700; }
      .sidebar { width: 38px; border-left: 1px solid #d5d2cf; display: flex; flex-direction: column; align-items: center; position: relative; }
      .sidebar .side { height: 29px; width: 29px; }
      .handle { position: absolute; left: -1px; top: 269px; width: 5px; height: 50px; background: #8a8b89; color: #fff; }
      .knob { border: 2px solid transparent; border-left-color: #fff; border-right: 0; }
      .status { display: grid; grid-template-columns: 27px 155px 220px 196px 171px 46px 31px 20px 20px 1fr 16px 65px 15px 33px; align-items: center; height: 16px; border-top: 1px solid #d5d2cf; font-size: 8px; white-space: nowrap; }
      .status > * { border-right: 1px solid #e6e4e2; height: 12px; }
      .status > .plain { border-right: 0; }
      .mid { text-align: center; }
      .pad { padding-left: 6px; }
      .status svg { display: block; }
      .mode { display: flex; justify-content: center; }
      .zoomctl { appearance: none; width: 65px; height: 12px; margin: 0; }
      .zoomctl::-webkit-slider-runnable-track { height: 1px; background: #8a8b89; }
      .zoomctl::-webkit-slider-thumb { appearance: none; width: 4px; height: 7px; margin-top: -3px; box-sizing: border-box; border: 1px solid #555; background: #fff; }
    `,
  ];

  render() {
    return html`
      <nav class="menubar">
        ${menus.map((m) => html`<button>${m}</button>`)}
        <button class="close" aria-label="Close document"><svg width="6" height="6" viewBox="0 0 6 6"><path stroke="#222" stroke-width="1.600" d="M.5.5l5 5M5.500.5l-5 5"/></svg></button>
      </nav>
      <div class="bar"><tool-bar .tools=${standardBar}></tool-bar></div>
      <div class="bar format">
        <div class="combo font"><input aria-label="Font Name" value="Calibri" /><button aria-label="Font list"><span class="arrow big"></span></button></div>
        <div class="combo size"><input aria-label="Font Size" value="18 pt" /><button aria-label="Size list"><span class="arrow big"></span></button></div>
        <tool-bar .tools=${formatBar}></tool-bar>
      </div>
      <div class="work">
        <main class="main">
          <div class="formulabar">
            <div class="combo name"><input aria-label="Name Box" value="A1:G1" /><button aria-label="Name list"><span class="arrow big"></span></button></div>
            <button class="fx" aria-label="Function Wizard">${icon('fx', 13)}</button>
            <button class="sum" aria-label="Select Function">${icon('sum', 14)}</button>
            <button class="drop" aria-label="Function options"><span class="arrow"></span></button>
            <button class="accept" aria-label="Formula">${icon('equals', 15)}</button>
            <input class="formula" aria-label="Input line" value="PARAMETRI AZIENDALI E GESTIONALI" />
            <button class="expand" aria-label="Expand Formula Bar"><span class="arrow big"></span></button>
          </div>
          <div class="gridwrap">
            <sheet-grid></sheet-grid>
            <div class="vscroll"><div class="vthumb"></div></div>
          </div>
          <div class="hscroll"><div class="hthumb"></div><div class="hgrip"></div></div>
          <div class="tabs">
            <button class="nav" aria-label="Sheet navigation"><svg width="60" height="12" viewBox="0 0 60 12"><path fill="none" stroke="#c4c2c0" d="M.5 1v10M9 1L3 6l6 5V8h5V4H9zM18 2v8M25 2l-5 4 5 4V7h3V5h-3zM31 2v8M36 2l5 4-5 4V7h-3V5h3zM44 2v8M51 1l6 5-6 5V8h-4V4h4zM59.500 1v10"/></svg></button>
            <button class="addtab" aria-label="Add sheet"><svg width="14" height="14" viewBox="0 0 14 14"><path fill="#fff" stroke="#d0cecc" d="M1 1h8v12H1z"/><circle cx="10" cy="7" r="2.500" fill="#3a6fb5"/><path stroke="#fff" d="M8.500 7h3M10 5.500v3"/></svg></button>
            ${tabs.map((x) => html`<button class=${classMap({ tab: true, active: x === 'Parametri' })}>${icon('lock', 11)}<span>${x}</span></button>`)}
          </div>
        </main>
        <aside class="sidebar">
          ${[['menu', 'Sidebar Settings'], ['props', 'Properties'], ['styles', 'Styles'], ['gallery', 'Gallery'], ['navigator', 'Navigator'], ['fx', 'Functions']].map(
            ([i, l]) => html`<button class="side" aria-label=${l}>${icon(i)}</button>`
          )}
          <button class="handle" aria-label="Hide sidebar"><span class="knob"></span></button>
        </aside>
      </div>
      <footer class="status">
        <span class="pad plain"><svg width="12" height="12" viewBox="0 0 12 12"><path fill="#eee" stroke="#888" d="M.5.5h11v11H2l-1.500-1.500zM3 .5v4h6v-4M3 11.500V7.500h6v4"/></svg></span>
        <span>Sheet 2 of 7</span>
        <span class="pad">Selected: 1 row, 7 columns</span>
        <span class="pad">PageStyle_Parametri</span>
        <span class="mid">English (USA)</span>
        <span></span>
        <span class="mode"><svg width="20" height="12" viewBox="0 0 20 12"><path fill="#fff" stroke="#3d9ad6" d="M.5 2.500h11v7H.5z"/><path fill="none" stroke="#444" d="M15 .5h5M15 11.500h5M17.500.5v11"/></svg></span>
        <span></span><span></span>
        <span class="mid">Average: ; Sum: 0</span>
        <button class="plain" aria-label="Zoom Out"><svg width="8" height="8" viewBox="0 0 8 8"><path stroke="#222" stroke-width="1.500" d="M1 4h6"/></svg></button>
        <input class="zoomctl plain" type="range" aria-label="Zoom" min="0" max="100" value="50" />
        <button class="plain" aria-label="Zoom In"><svg width="8" height="8" viewBox="0 0 8 8"><path stroke="#222" stroke-width="1.500" d="M1 4h6M4 1v6"/></svg></button>
        <span class="pad plain">100%</span>
      </footer>
    `;
  }
}
